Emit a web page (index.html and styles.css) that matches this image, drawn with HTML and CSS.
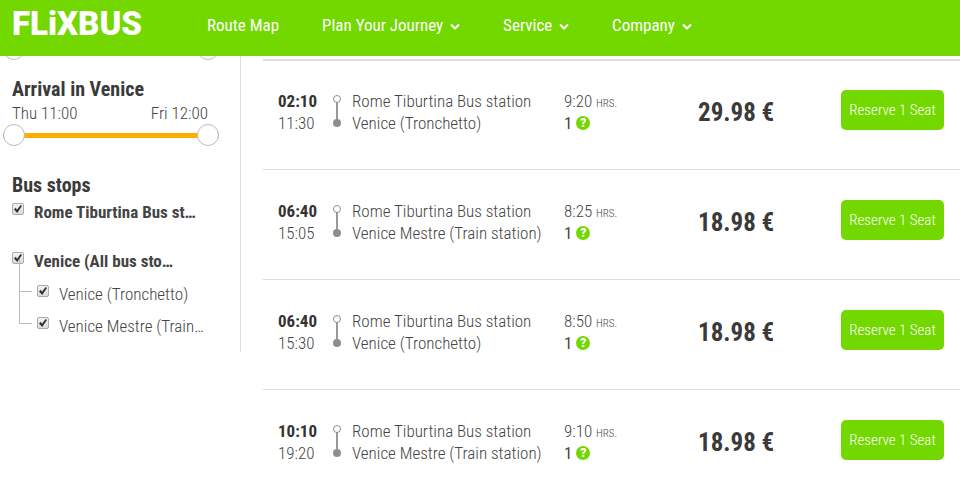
FILE: index.html
```
<!DOCTYPE html>
<html lang="en">
<head>
  <meta charset="UTF-8">
  <meta name="viewport" content="width=device-width, initial-scale=1.0">
  <title>FlixBus</title>
  <link rel="stylesheet" href="styles.css">
</head>
<body>

<header class="topbar">
  <a class="logo" href="#">FLiXBUS</a>
  <nav class="menu">
    <a href="#">Route Map</a>
    <a href="#">Plan Your Journey <svg class="chevron" viewBox="0 0 10 8"><path d="M1 1.500l4 4l4 -4"/></svg></a>
    <a href="#">Service <svg class="chevron" viewBox="0 0 10 8"><path d="M1 1.500l4 4l4 -4"/></svg></a>
    <a href="#">Company <svg class="chevron" viewBox="0 0 10 8"><path d="M1 1.500l4 4l4 -4"/></svg></a>
  </nav>
</header>

<main class="page">
  <aside class="filters">
    <!-- Departure time -->
    <div class="slider">
      <input type="range" min="0" max="100" value="0" aria-label="Earliest departure">
      <input type="range" min="0" max="100" value="100" aria-label="Latest departure">
    </div>

    <!-- Arrival time -->
    <h2>Arrival in Venice</h2>
    <div class="range-labels">
      <span>Thu 11:00</span>
      <span>Fri 12:00</span>
    </div>
    <div class="slider">
      <input type="range" min="0" max="100" value="0" aria-label="Earliest arrival">
      <input type="range" min="0" max="100" value="100" aria-label="Latest arrival">
    </div>

    <h2 class="stops-title">Bus stops</h2>
    <label class="stop"><input type="checkbox" checked><span>Rome Tiburtina Bus st…</span></label>
    <label class="stop stop-city"><input type="checkbox" checked><span>Venice (All bus sto…</span></label>
    <ul class="substops">
      <li><label class="stop"><input type="checkbox" checked><span>Venice (Tronchetto)</span></label></li>
      <li><label class="stop"><input type="checkbox" checked><span>Venice Mestre (Train…</span></label></li>
    </ul>
  </aside>

  <ul class="results">
    <li class="trip">
      <div class="times"><b>02:10</b><span>11:30</span></div>
      <svg class="route" viewBox="0 0 10 34"><path d="M5 8v18"/><circle class="from" cx="5" cy="5" r="3.500"/><circle class="to" cx="5" cy="29" r="4"/></svg>
      <div class="stations"><span>Rome Tiburtina Bus station</span><span>Venice (Tronchetto)</span></div>
      <div class="duration"><span>9:20 <small>HRS.</small></span><div class="seats">1 <button class="help" type="button">?</button></div></div>
      <div class="price">29.98 €</div>
      <button class="reserve" type="button">Reserve 1 Seat</button>
    </li>
    <li class="trip">
      <div class="times"><b>06:40</b><span>15:05</span></div>
      <svg class="route" viewBox="0 0 10 34"><path d="M5 8v18"/><circle class="from" cx="5" cy="5" r="3.500"/><circle class="to" cx="5" cy="29" r="4"/></svg>
      <div class="stations"><span>Rome Tiburtina Bus station</span><span>Venice Mestre (Train station)</span></div>
      <div class="duration"><span>8:25 <small>HRS.</small></span><div class="seats">1 <button class="help" type="button">?</button></div></div>
      <div class="price">18.98 €</div>
      <button class="reserve" type="button">Reserve 1 Seat</button>
    </li>
    <li class="trip">
      <div class="times"><b>06:40</b><span>15:30</span></div>
      <svg class="route" viewBox="0 0 10 34"><path d="M5 8v18"/><circle class="from" cx="5" cy="5" r="3.500"/><circle class="to" cx="5" cy="29" r="4"/></svg>
      <div class="stations"><span>Rome Tiburtina Bus station</span><span>Venice (Tronchetto)</span></div>
      <div class="duration"><span>8:50 <small>HRS.</small></span><div class="seats">1 <button class="help" type="button">?</button></div></div>
      <div class="price">18.98 €</div>
      <button class="reserve" type="button">Reserve 1 Seat</button>
    </li>
    <li class="trip">
      <div class="times"><b>10:10</b><span>19:20</span></div>
      <svg class="route" viewBox="0 0 10 34"><path d="M5 8v18"/><circle class="from" cx="5" cy="5" r="3.500"/><circle class="to" cx="5" cy="29" r="4"/></svg>
      <div class="stations"><span>Rome Tiburtina Bus station</span><span>Venice Mestre (Train station)</span></div>
      <div class="duration"><span>9:10 <small>HRS.</small></span><div class="seats">1 <button class="help" type="button">?</button></div></div>
      <div class="price">18.98 €</div>
      <button class="reserve" type="button">Reserve 1 Seat</button>
    </li>
  </ul>
</main>

</body>
</html>
```
FILE: styles.css
```
* {
  box-sizing: border-box;
}
body {
  margin: 0;
  background: #fff;
  color: #444;
  font-family: "Roboto Condensed", "Liberation Sans Narrow", Roboto, sans-serif;
  font-size: 17px;
  font-weight: 300;
  line-height: 22px;
}
ul {
  list-style: none;
  margin: 0;
  padding: 0;
}
.topbar {
  position: fixed;
  top: 0;
  left: 0;
  right: 0;
  z-index: 1;
  display: flex;
  height: 56px;
  padding: 0 12px;
  background: #73d700;
}
.topbar a {
  color: #fff;
  text-decoration: none;
}
.logo {
  width: 195px;
  font-family: Roboto, sans-serif;
  font-size: 33px;
  font-weight: 900;
  line-height: 48px;
}
.menu {
  display: flex;
  gap: 43px;
  font-weight: 400;
  line-height: 50px;
}
.chevron {
  width: 10px;
  height: 8px;
  margin-left: 3px;
  fill: none;
  stroke: #fff;
  stroke-width: 2;
}
.page {
  display: flex;
  align-items: flex-start;
}
.filters {
  flex: none;
  width: 241px;
  padding: 38px 32px 13px 12px;
  border-right: 1px solid #ddd;
}
.filters h2 {
  margin: 16px 0 0;
  color: #3a3a3a;
  font-size: 20px;
  font-weight: 700;
  line-height: 26px;
}
.filters .stops-title {
  margin-top: 26px;
}
.range-labels {
  display: flex;
  justify-content: space-between;
}
.slider {
  display: grid;
  height: 22px;
  margin: 0 -11px 0 -9px;
  background: linear-gradient(#ffad00, #ffad00) center / 100% 5px no-repeat;
}
.slider input {
  grid-area: 1 / 1;
  width: 100%;
  height: 22px;
  margin: 0;
  appearance: none;
  background: none;
  pointer-events: none;
}
.slider input::-webkit-slider-thumb {
  width: 22px;
  height: 22px;
  appearance: none;
  border: 1px solid #bbb;
  border-radius: 50%;
  background: #fff;
  pointer-events: auto;
}
.stop {
  display: flex;
  gap: 10px;
  font-weight: 700;
  line-height: 28px;
  white-space: nowrap;
}
.stop-city {
  margin-top: 21px;
}
.stop input {
  flex: none;
  display: grid;
  place-items: center;
  width: 12px;
  height: 12px;
  margin: 5px 0 0;
  appearance: none;
  border: 1px solid #aaa;
  border-radius: 2px;
  background: linear-gradient(#f2f2f2, #ddd);
}
.stop input:checked::before {
  content: "";
  width: 8px;
  height: 8px;
  background: #333;
  clip-path: polygon(0 55%, 20% 35%, 38% 58%, 82% 0, 100% 14%, 40% 100%);
}
.substops {
  margin-left: 7px;
}
.substops li {
  display: flex;
  height: 32px;
}
.substops li::before {
  content: "";
  width: 12px;
  height: 32px;
  margin: -16px 5px 0 0;
  border-left: 1px solid #bbb;
  border-bottom: 1px solid #bbb;
}
.substops .stop {
  font-weight: 300;
  line-height: 38px;
}
.substops .stop input {
  margin-top: 10px;
}
.results {
  flex: 1;
  margin-left: 22px;
  padding-top: 59px;
}
.trip {
  display: grid;
  grid-template-columns: 54px 20px 212fr 134fr 143fr 103px;
  height: 110px;
  padding: 30px 16px 0 15px;
  border-top: 1px solid #ddd;
}
.trip:first-child {
  padding-top: 29px;
  border-top-width: 2px;
}
.times span,
.times b,
.stations span,
.duration > span {
  display: block;
}
.times b {
  color: #333;
  font-weight: 700;
}
.route {
  width: 10px;
  height: 34px;
  margin-top: 4px;
  fill: none;
  stroke: #999;
  stroke-width: 2;
}
.route .from {
  stroke: #8e8e8e;
  stroke-width: 1;
}
.route .to {
  fill: #8e8e8e;
  stroke: none;
}
.duration small {
  font-size: 11px;
  line-height: 11px;
}
.seats {
  display: flex;
  align-items: center;
  gap: 4px;
  font-weight: 400;
}
.help {
  width: 14px;
  height: 14px;
  padding: 0;
  border: none;
  border-radius: 50%;
  background: #73d700;
  color: #fff;
  font: 900 12px/14px Roboto, sans-serif;
}
.price {
  color: #3a3a3a;
  font-size: 25px;
  font-weight: 700;
  line-height: 46px;
}
.reserve {
  height: 40px;
  padding: 0;
  border: none;
  border-radius: 5px;
  background: #73d700;
  color: #fff;
  font-family: inherit;
  font-size: 15px;
  font-weight: 300;
}
```
